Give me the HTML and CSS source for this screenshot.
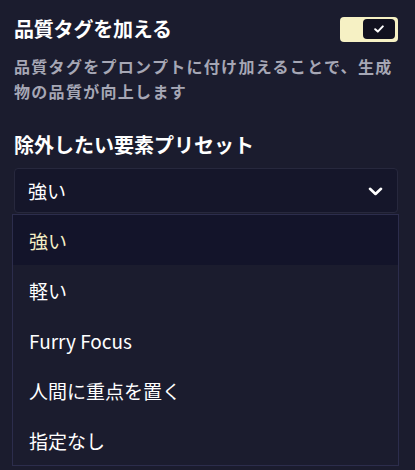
FILE: index.html
```html
<!DOCTYPE html>
<html lang="ja">
<head>
<meta charset="utf-8">
<link rel="stylesheet" href="styles.css">
</head>
<body>
<div class="wrap">
  <div class="row">
    <div class="title">品質タグを加える</div>
    <div class="toggle">
      <div class="knob">
        <svg width="10" height="8" viewBox="0 0 10 8"><path d="M1.2 4.2 L3.8 6.6 L8.8 1.4" fill="none" stroke="#fff" stroke-width="2" stroke-linecap="round" stroke-linejoin="round"/></svg>
      </div>
    </div>
  </div>
  <p class="desc">品質タグをプロンプトに付け加えることで、生成物の品質が向上します</p>
  <div class="heading">除外したい要素プリセット</div>
  <div class="select">
    <span>強い</span>
    <svg class="chev" width="15" height="9" viewBox="0 0 15 9"><path d="M2 1.8 L7.5 7 L13 1.8" fill="none" stroke="#fff" stroke-width="2.6" stroke-linecap="round" stroke-linejoin="round"/></svg>
  </div>
  <ul class="list">
    <li class="item active">強い</li>
    <li class="item">軽い</li>
    <li class="item">Furry Focus</li>
    <li class="item">人間に重点を置く</li>
    <li class="item">指定なし</li>
  </ul>
</div>
</body>
</html>
```

FILE: styles.css
```css
html, body {
  margin: 0;
  background: #1b1c2e;
  font-family: "Noto Sans CJK JP", "Noto Sans", sans-serif;
  color: #ffffff;
}
.wrap {
  padding: 16px 17px 0 14px;
}
.row {
  display: flex;
  justify-content: space-between;
  align-items: center;
  height: 26px;
}
.title {
  font-size: 20px;
  font-weight: 700;
  line-height: 26px;
  letter-spacing: -0.2px;
}
.toggle {
  width: 58px;
  height: 25px;
  box-sizing: border-box;
  background: #f6f1c4;
  border-radius: 4px;
  display: flex;
  justify-content: flex-end;
  align-items: center;
  padding-right: 3px;
}
.knob {
  width: 32px;
  height: 20px;
  background: #11111f;
  border-radius: 4px;
  display: flex;
  align-items: center;
  justify-content: center;
}
.desc {
  margin: 12px 0 0;
  font-size: 16px;
  font-weight: 700;
  line-height: 25px;
  letter-spacing: 1.3px;
  color: #a6a7b5;
}
.heading {
  margin-top: 27px;
  font-size: 20px;
  font-weight: 700;
  line-height: 28px;
}
.select {
  margin-top: 9px;
  height: 45px;
  box-sizing: border-box;
  border: 1px solid #27283d;
  border-radius: 4px;
  background: #15162a;
  display: flex;
  align-items: center;
  justify-content: space-between;
  padding: 0 14px 0 13px;
  font-size: 19px;
}
.chev {
  margin-top: 2px;
}
.list {
  list-style: none;
  margin: 1px -1px 0 -2px;
  padding: 0;
  border: 1px solid #2c2d4c;
  background: #1b1c2e;
}
.item {
  height: 50px;
  display: flex;
  align-items: center;
  padding-left: 16px;
  font-size: 19px;
  color: #ffffff;
}
.item.active {
  background: #13142a;
  color: #f3eec6;
}
```
